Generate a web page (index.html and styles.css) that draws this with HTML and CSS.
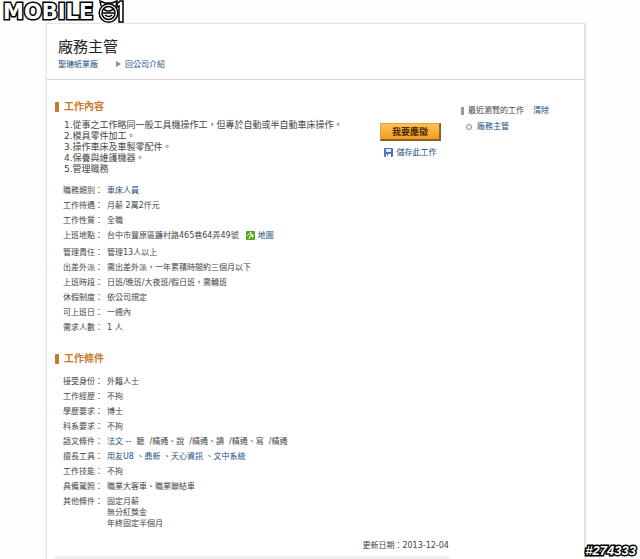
FILE: index.html
```html
<!DOCTYPE html>
<html lang="zh-Hant">
<head>
    <meta charset="UTF-8">
    <meta name="viewport" content="width=device-width, initial-scale=1.0">
    <title>廠務主管</title>
    <link rel="stylesheet" href="styles.css">
</head>
<body>

<div class="logo">
    <span class="logo-text">MOBILE</span>
    <svg class="logo-icon" width="28" height="24" viewBox="0 0 28 24">
        <path d="M4 6 L3 1 L8 3 H15 L20 1 L19 6" fill="#fff" stroke="#000" stroke-width="1.5"/>
        <circle cx="11.500" cy="13" r="9.300" fill="#fff" stroke="#000" stroke-width="1.500"/>
        <circle cx="11.500" cy="13" r="6.500" fill="#fff" stroke="#000" stroke-width="1.500"/>
        <path d="M6 9 L10 11 H13 L17 9 M6 13 H17 M8 15 Q12 18 15 15" fill="none" stroke="#000" stroke-width="1.500"/>
        <path d="M20 4 L23 1 H26 V22 H22 V6 L20 7Z" fill="#fff" stroke="#000" stroke-width="1.500"/>
    </svg>
</div>

<div class="card">
    <header class="card-header">
        <h1>廠務主管</h1>
        <nav class="company">
            <a href="#">聖璉紙業廠</a>
            <a href="#" class="back">回公司介紹</a>
        </nav>
    </header>

    <div class="content">
        <main class="main">
            <section class="intro">
                <div>
                    <h2>工作內容</h2>
                    <p class="desc">
                        1.從事之工作略同一般工具機操作工，但專於自動或半自動車床操作。<br>
                        2.模具零件加工。<br>
                        3.操作車床及車製零配件。<br>
                        4.保養與維護機器。<br>
                        5.管理職務
                    </p>
                </div>
                <div class="actions">
                    <button type="button" class="apply">我要應徵</button>
                    <a href="#" class="save">
                        <svg width="9" height="9" viewBox="0 0 9 9">
                            <rect width="9" height="9" rx="1" fill="#4a78b4"/>
                            <rect x="2" y="1" width="5" height="3" fill="#dfeaf6"/>
                            <rect x="2" y="6" width="5" height="3" fill="#fff"/>
                            <rect x="3" y="6" width="1" height="2" fill="#4a78b4"/>
                        </svg>
                        儲存此工作
                    </a>
                </div>
            </section>

            <dl class="info">
                <dt>職務類別：</dt><dd><a href="#">車床人員</a></dd>
                <dt>工作待遇：</dt><dd>月薪 2萬2仟元</dd>
                <dt>工作性質：</dt><dd>全職</dd>
                <dt>上班地點：</dt>
                <dd class="place">台中市豐原區鐮村路465巷64弄49號
                    <a href="#" class="map">
                        <svg width="9" height="9" viewBox="0 0 9 9">
                            <rect width="9" height="9" rx="1" fill="#55a51c"/>
                            <path d="M1 5 L5 1 V4 H8 M3 8 L4 5 H7 L6 7" fill="none" stroke="#fff" stroke-width="1"/>
                        </svg>
                        地圖
                    </a>
                </dd>
                <dt>管理責任：</dt><dd>管理13人以上</dd>
                <dt>出差外派：</dt><dd>需出差外派，一年累積時間約三個月以下</dd>
                <dt>上班時段：</dt><dd>日班/晚班/大夜班/假日班，需輪班</dd>
                <dt>休假制度：</dt><dd>依公司規定</dd>
                <dt>可上班日：</dt><dd>一週內</dd>
                <dt>需求人數：</dt><dd>1 人</dd>
            </dl>

            <section class="terms">
                <h2>工作條件</h2>
                <dl class="info">
                    <dt>接受身份：</dt><dd>外籍人士</dd>
                    <dt>工作經歷：</dt><dd>不拘</dd>
                    <dt>學歷要求：</dt><dd>博士</dd>
                    <dt>科系要求：</dt><dd>不拘</dd>
                    <dt>語文條件：</dt><dd><a href="#">法文</a> --&nbsp; 聽&nbsp; /精通、說&nbsp; /精通、讀&nbsp; /精通、寫&nbsp; /精通</dd>
                    <dt>擅長工具：</dt><dd><a href="#">用友U8</a> 、<a href="#">鼎新</a> 、<a href="#">天心資訊</a> 、<a href="#">文中系統</a></dd>
                    <dt>工作技能：</dt><dd>不拘</dd>
                    <dt>具備駕照：</dt><dd>職業大客車、職業聯結車</dd>
                    <dt>其他條件：</dt><dd>固定月薪<br>無分紅獎金<br>年終固定半個月</dd>
                </dl>
            </section>

            <p class="updated">更新日期：2013-12-04</p>
        </main>

        <aside class="side">
            <div class="side-title">
                <h3>最近瀏覽的工作</h3>
                <a href="#">清除</a>
            </div>
            <ul>
                <li><a href="#">廠務主管</a></li>
            </ul>
        </aside>
    </div>
</div>

<div class="tag">#274333</div>

</body>
</html>
```

FILE: styles.css
```css
* {
    box-sizing: border-box;
}
body {
    margin: 0;
    min-height: 100vh;
    display: flex;
    flex-direction: column;
    padding: 23px 54px 0 46px;
    background-color: #fefefe;
    color: #444;
    font-family: "DejaVu Sans", "Noto Sans CJK TC", sans-serif;
    font-size: 8px;
    line-height: 11px;
}
h1, h2, h3, p, dl, dd, ul {
    margin: 0;
    padding: 0;
}
a {
    color: #234f83;
    text-decoration: none;
}

/* watermarks */
.logo {
    position: absolute;
    top: 0;
    left: 3px;
    display: flex;
    align-items: center;
}
.logo-text, .tag {
    color: #fff;
    font-weight: bold;
    -webkit-text-stroke: 3px #000;
    paint-order: stroke fill;
}
.logo-text {
    font-size: 21px;
    line-height: 24px;
}
.logo-icon {
    margin-left: 4px;
}
.tag {
    position: absolute;
    right: 4px;
    bottom: 1px;
    font-family: "Liberation Sans", sans-serif;
    font-style: italic;
    font-size: 13px;
    line-height: 14px;
}

/* card */
.card {
    flex: 1;
    background-color: #fff;
    border: 1px solid #e4e4e4;
    border-right: 2px solid #e4e4e4;
    border-bottom: 0;
    box-shadow: 0 0 2px #e8e8e8;
}
.card-header {
    padding: 12px 11px 9px;
    border-bottom: 1px solid #d2d2d2;
}
h1 {
    font-size: 15px;
    line-height: 22px;
    font-weight: normal;
    color: #222;
}
.company {
    display: flex;
    gap: 18px;
    padding-top: 1px;
}
.back::before {
    content: "";
    display: inline-block;
    margin-right: 4px;
    border-left: 5px solid #888;
    border-top: 3px solid transparent;
    border-bottom: 3px solid transparent;
}
.content {
    display: flex;
    gap: 12px;
}
.main {
    flex: 16;
    padding: 20px 0 0 8px;
}
.intro {
    display: flex;
    justify-content: space-between;
}
h2 {
    display: flex;
    align-items: center;
    gap: 5px;
    color: #c57a2a;
    font-size: 10px;
    line-height: 14px;
}
h2::before {
    content: "";
    width: 4px;
    height: 10px;
    border-radius: 1px;
    background-color: #c57a2a;
}
.desc {
    padding: 6px 0 0 9px;
    font-size: 9px;
    white-space: nowrap;
}
.actions {
    display: flex;
    flex-direction: column;
    align-items: center;
    gap: 6px;
    padding: 23px 8px 0 0;
}
.apply {
    width: 61px;
    height: 18px;
    padding: 0;
    border: 1px solid #e3a33c;
    border-right: 2px solid #8a6424;
    border-bottom: 2px solid #8a6424;
    background: linear-gradient(#fdc152, #f59a1d);
    color: #4a2a08;
    font-family: inherit;
    font-size: 9px;
    font-weight: bold;
    line-height: 14px;
    cursor: pointer;
}
.save, .map {
    display: flex;
    align-items: center;
    gap: 3px;
}
.info {
    display: grid;
    grid-template-columns: 44px 1fr;
    row-gap: 4px;
    padding: 10px 0 11px 8px;
}
.terms {
    padding-top: 8px;
}
.place {
    display: flex;
    align-items: center;
    gap: 7px;
    padding-bottom: 2px;
}
.updated {
    padding-bottom: 5px;
    border-bottom: 3px solid #eee;
    text-align: right;
}

/* recently viewed */
.side {
    flex: 5;
    padding-top: 25px;
}
.side-title {
    display: flex;
    align-items: center;
    gap: 9px;
}
h3 {
    padding-left: 4px;
    border-left: 3px solid #999;
    font-size: 8px;
    font-weight: normal;
    line-height: 8px;
}
.side ul {
    padding: 5px 0 0 5px;
    list-style: none;
}
.side li {
    display: flex;
    align-items: center;
    gap: 5px;
}
.side li::before {
    content: "";
    width: 4px;
    height: 4px;
    border: 1px solid #888;
    border-radius: 50%;
}
```
